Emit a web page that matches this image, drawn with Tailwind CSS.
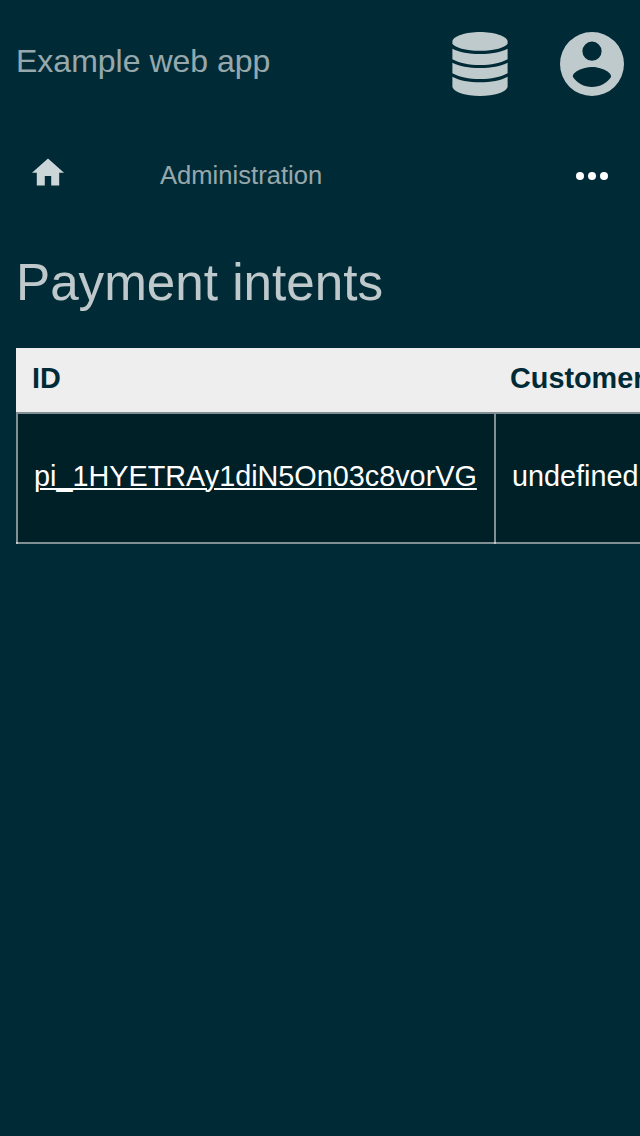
<!DOCTYPE html>
<html lang="en">
<head>
<meta charset="utf-8">
<title>Payment intents</title>
<script src="https://cdn.jsdelivr.net/npm/@tailwindcss/browser@4"></script>
</head>
<body class="h-[1136px] w-[640px] overflow-hidden bg-[#002b36] font-['Liberation_Sans',Arial,sans-serif]">
<header class="flex h-32 items-center px-4">
  <a class="-mt-1.5 text-[32px] leading-9 whitespace-nowrap text-white/60">Example web app</a>
  <svg class="ml-auto h-16 w-14 text-[#bfcacd]" viewBox="0 0 56 64" fill="currentColor">
    <path d="M28 0C42 0 54.500 4 55.600 9v2.500C54 15.500 42 18.800 28 18.800S2 15.500 .400 11.500V9C1.500 4 14 0 28 0Z"/>
    <path d="M.400 16.700C7 20.200 17 22 28 22s21-1.800 27.600-5.300V27.200C49 31 39 33 28 33S7 31 .400 27.200Z"/>
    <path d="M.400 30.700C7 34.200 17 36 28 36s21-1.800 27.600-5.300V41.200C49 45 39 47 28 47S7 45 .400 41.200Z"/>
    <path d="M.400 44.700C7 48.500 17 50.300 28 50.300s21-1.800 27.600-5.600V55c-2 5.500-13 9-27.600 9S2.400 60.500.400 55Z"/>
  </svg>
  <svg class="ml-[52px] size-16 text-[#bfcacd]" viewBox="2 2 20 20" fill="currentColor">
    <path d="M12 19.200c-2.500 0-4.710-1.280-6-3.220.03-1.990 4-3.080 6-3.080 1.990 0 5.970 1.090 6 3.080-1.290 1.940-3.500 3.220-6 3.220M12 5a3 3 0 1 1 0 6 3 3 0 0 1 0-6m0-3a10 10 0 1 0 0 20 10 10 0 0 0 0-20Z"/>
  </svg>
</header>
<nav class="flex h-24 items-center px-8">
  <svg class="-mt-2 h-7 w-8 text-[#ccd5d7]" viewBox="2 2.75 20 17.5" fill="currentColor"><path d="M10 20v-6h4v6h5v-8h3L12 3 2 12h3v8z"/></svg>
  <a class="ml-24 -mt-0.5 text-[25.6px] leading-8 text-white/60">Administration</a>
  <svg class="ml-auto h-2 w-8 text-white" viewBox="0 0 32 8" fill="currentColor"><circle cx="4" cy="4" r="4"/><circle cx="16" cy="4" r="4"/><circle cx="28" cy="4" r="4"/></svg>
</nav>
<main class="pl-4">
  <h1 class="h-[124px] pt-[30px] text-[51.2px] leading-[58px] text-white/75">Payment intents</h1>
  <div class="w-[624px] overflow-hidden text-[28.8px] whitespace-nowrap">
    <div class="flex h-16 items-center bg-[#eee] font-bold text-[#002b36]">
      <div class="-mt-1 w-[478px] shrink-0 px-4 leading-8">ID</div>
      <div class="-mt-1 shrink-0 px-4 leading-8">Customer</div>
    </div>
    <div class="flex h-[132px] border-y-2 border-[#808f93] bg-[#002028] text-white">
      <div class="-mb-0.5 flex w-[478px] shrink-0 items-center border-l-2 border-white/50 pb-0.5 pl-4"><a class="-mt-1 leading-8 underline decoration-2 underline-offset-2">pi_1HYETRAy1diN5On03c8vorVG</a></div>
      <div class="-mb-0.5 flex shrink-0 items-center border-l-2 border-white/50 pb-0.5 pl-4"><span class="-mt-1 leading-8">undefined</span></div>
    </div>
  </div>
</main>
</body>
</html>
